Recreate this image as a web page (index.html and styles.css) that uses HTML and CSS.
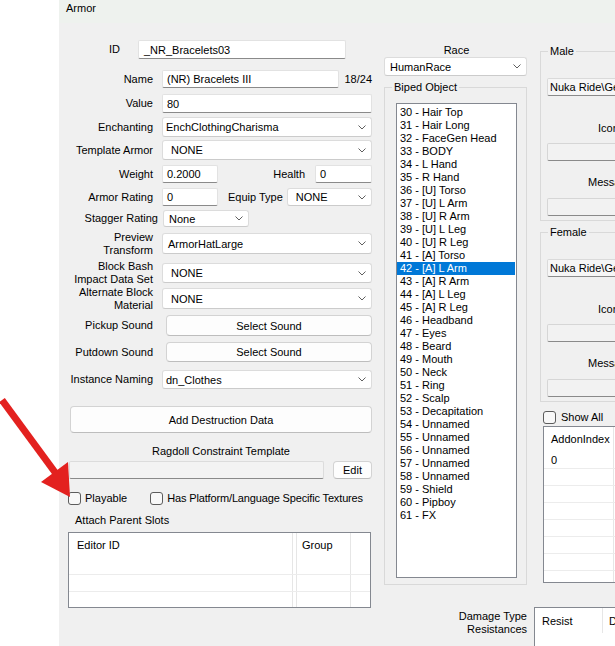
FILE: index.html
```html
<!DOCTYPE html>
<html>
<head>
<meta charset="utf-8">
<title>Armor</title>
<link rel="stylesheet" href="styles.css">
</head>
<body>
<div class="desk">
  <div class="gutter"></div>
  <div class="window">
    <div class="titlebar">Armor</div>
    <div class="client">
      <!-- record fields -->
      <div class="form">
        <div class="row r-id"><span class="lbl lbl-id">ID</span><div class="edit w-id">_NR_Bracelets03</div></div>
        <div class="row r-name"><span class="lbl">Name</span><div class="edit w-name">(NR) Bracelets III</div><span class="count">18/24</span></div>
        <div class="row r-value"><span class="lbl">Value</span><div class="edit grow">80</div></div>
        <div class="row r-ench"><span class="lbl">Enchanting</span><div class="combo grow"><span>EnchClothingCharisma</span><svg class="chev" width="8" height="5" viewBox="0 0 8 5"><path d="M0.5 0.5L4 4L7.5 0.5"/></svg></div></div>
        <div class="row r-tmpl"><span class="lbl">Template Armor</span><div class="combo grow wide-pad"><span>NONE</span><svg class="chev" width="8" height="5" viewBox="0 0 8 5"><path d="M0.5 0.5L4 4L7.5 0.5"/></svg></div></div>
        <div class="row r-weight"><span class="lbl">Weight</span><div class="edit w-num">0.2000</div><span class="inline-lbl health">Health</span><div class="edit w-num2">0</div></div>
        <div class="row r-armor"><span class="lbl">Armor Rating</span><div class="edit w-num">0</div><span class="inline-lbl equip">Equip Type</span><div class="combo grow wide-pad"><span>NONE</span><svg class="chev" width="8" height="5" viewBox="0 0 8 5"><path d="M0.5 0.5L4 4L7.5 0.5"/></svg></div></div>
        <div class="row r-stag"><span class="lbl lbl-stag">Stagger Rating</span><div class="combo w-stag mid-pad"><span>None</span><svg class="chev" width="8" height="5" viewBox="0 0 8 5"><path d="M0.5 0.5L4 4L7.5 0.5"/></svg></div></div>
        <div class="row r-prev"><span class="lbl">Preview<br>Transform</span><div class="combo grow mid-pad"><span>ArmorHatLarge</span><svg class="chev" width="8" height="5" viewBox="0 0 8 5"><path d="M0.5 0.5L4 4L7.5 0.5"/></svg></div></div>
        <div class="row r-bash"><span class="lbl">Block Bash<br>Impact Data Set</span><div class="combo grow wide-pad"><span>NONE</span><svg class="chev" width="8" height="5" viewBox="0 0 8 5"><path d="M0.5 0.5L4 4L7.5 0.5"/></svg></div></div>
        <div class="row r-alt"><span class="lbl">Alternate Block<br>Material</span><div class="combo grow wide-pad"><span>NONE</span><svg class="chev" width="8" height="5" viewBox="0 0 8 5"><path d="M0.5 0.5L4 4L7.5 0.5"/></svg></div></div>
        <div class="row r-pick"><span class="lbl">Pickup Sound</span><div class="btn grow sound">Select Sound</div></div>
        <div class="row r-put"><span class="lbl">Putdown Sound</span><div class="btn grow sound">Select Sound</div></div>
        <div class="row r-inst"><span class="lbl">Instance Naming</span><div class="combo grow"><span>dn_Clothes</span><svg class="chev" width="8" height="5" viewBox="0 0 8 5"><path d="M0.5 0.5L4 4L7.5 0.5"/></svg></div></div>

        <div class="btn destruction">Add Destruction Data</div>
        <div class="ragdoll-lbl">Ragdoll Constraint Template</div>
        <div class="row r-rag"><div class="field-off rag-field"></div><div class="btn edit-btn">Edit</div></div>
        <div class="row r-checks">
          <label class="check playable"><span class="box"></span>Playable</label>
          <label class="check platform"><span class="box"></span>Has Platform/Language Specific Textures</label>
        </div>
        <div class="attach-lbl">Attach Parent Slots</div>
        <div class="grid slots">
          <div class="grid-head"><div class="c c1">Editor ID</div><div class="c c2"></div><div class="c c3">Group</div><div class="c c4"></div></div>
          <div class="grid-row"><div class="c c1"></div><div class="c c2"></div><div class="c c3"></div><div class="c c4"></div></div>
          <div class="grid-row"><div class="c c1"></div><div class="c c2"></div><div class="c c3"></div><div class="c c4"></div></div>
          <div class="grid-row"><div class="c c1"></div><div class="c c2"></div><div class="c c3"></div><div class="c c4"></div></div>
        </div>
      </div>

      <div class="side">
        <div class="side-top">
          <!-- race and biped slots -->
          <div class="biped-col">
            <div class="race-lbl">Race</div>
            <div class="combo race"><span>HumanRace</span><svg class="chev" width="8" height="5" viewBox="0 0 8 5"><path d="M0.5 0.5L4 4L7.5 0.5"/></svg></div>
            <fieldset class="group biped">
              <legend>Biped Object</legend>
              <div class="listbox">
                <div class="item">30 - Hair Top</div>
                <div class="item">31 - Hair Long</div>
                <div class="item">32 - FaceGen Head</div>
                <div class="item">33 - BODY</div>
                <div class="item">34 - L Hand</div>
                <div class="item">35 - R Hand</div>
                <div class="item">36 - [U] Torso</div>
                <div class="item">37 - [U] L Arm</div>
                <div class="item">38 - [U] R Arm</div>
                <div class="item">39 - [U] L Leg</div>
                <div class="item">40 - [U] R Leg</div>
                <div class="item">41 - [A] Torso</div>
                <div class="item selected">42 - [A] L Arm</div>
                <div class="item">43 - [A] R Arm</div>
                <div class="item">44 - [A] L Leg</div>
                <div class="item">45 - [A] R Leg</div>
                <div class="item">46 - Headband</div>
                <div class="item">47 - Eyes</div>
                <div class="item">48 - Beard</div>
                <div class="item">49 - Mouth</div>
                <div class="item">50 - Neck</div>
                <div class="item">51 - Ring</div>
                <div class="item">52 - Scalp</div>
                <div class="item">53 - Decapitation</div>
                <div class="item">54 - Unnamed</div>
                <div class="item">55 - Unnamed</div>
                <div class="item">56 - Unnamed</div>
                <div class="item">57 - Unnamed</div>
                <div class="item">58 - Unnamed</div>
                <div class="item">59 - Shield</div>
                <div class="item">60 - Pipboy</div>
                <div class="item">61 - FX</div>
              </div>
            </fieldset>
          </div>

          <!-- world models -->
          <div class="models-col">
            <fieldset class="group model">
              <legend>Male</legend>
              <div class="path">Nuka Ride\Gear\Bracelets03.nif</div>
              <div class="cap cap-icon">Icon</div>
              <div class="slot"></div>
              <div class="cap cap-msg">Message Icon</div>
              <div class="slot"></div>
            </fieldset>
            <fieldset class="group model female">
              <legend>Female</legend>
              <div class="path">Nuka Ride\Gear\Bracelets03.nif</div>
              <div class="cap cap-icon">Icon</div>
              <div class="slot"></div>
              <div class="cap cap-msg">Message Icon</div>
              <div class="slot"></div>
            </fieldset>
            <label class="check show-all"><span class="box"></span>Show All</label>
            <div class="grid addons">
              <div class="grid-head"><div class="c a1">AddonIndex</div><div class="c a2">Model</div></div>
              <div class="grid-row"><div class="c a1">0</div><div class="c a2"></div></div>
              <div class="grid-row"><div class="c a1"></div><div class="c a2"></div></div>
              <div class="grid-row"><div class="c a1"></div><div class="c a2"></div></div>
              <div class="grid-row"><div class="c a1"></div><div class="c a2"></div></div>
              <div class="grid-row"><div class="c a1"></div><div class="c a2"></div></div>
              <div class="grid-row"><div class="c a1"></div><div class="c a2"></div></div>
              <div class="grid-row"><div class="c a1"></div><div class="c a2"></div></div>
              <div class="grid-row"><div class="c a1"></div><div class="c a2"></div></div>
            </div>
          </div>
        </div>

        <div class="damage">
          <div class="damage-lbl">Damage Type<br>Resistances</div>
          <div class="grid resist">
            <div class="grid-head"><div class="c d1">Resist</div><div class="c d2">Damage</div></div>
          </div>
        </div>
      </div>
    </div>
  </div>

  <svg class="arrow" width="80" height="510" viewBox="0 0 80 510">
    <line x1="2" y1="400" x2="57" y2="475" stroke="#e3211f" stroke-width="7"/>
    <polygon points="41,482 68,462 70,497" fill="#e3211f"/>
  </svg>
</div>
</body>
</html>
```

FILE: styles.css
```css
* { box-sizing: border-box; }

html, body {
  margin: 0;
  padding: 0;
}

body {
  width: 615px;
  height: 646px;
  overflow: hidden;
  background: #ffffff;
  font-family: "Liberation Sans", Arial, sans-serif;
  font-size: 11px;
  color: #000;
}

.desk {
  position: relative;
  display: flex;
  width: 615px;
  height: 646px;
}

.gutter {
  width: 59px;
  flex: none;
  background: #ffffff;
}

.window {
  width: 556px;
  height: 646px;
  flex: none;
  overflow: hidden;
  background: #f0f0f0;
  display: flex;
  flex-direction: column;
}

.titlebar {
  height: 23px;
  flex: none;
  background: #eef2ee;
  padding: 2px 0 0 7px;
  line-height: 13px;
}

.client {
  display: flex;
  flex: 1;
}

/* ---------- left form ---------- */

.form {
  width: 325px;
  flex: none;
  padding: 17px 12px 0 0;
}

.row {
  display: flex;
  align-items: center;
}

.row > .edit,
.row > .combo,
.row > .btn,
.row > .field-off {
  height: 100%;
}

.lbl {
  width: 94px;
  flex: none;
  text-align: right;
  margin-right: 9px;
  line-height: 13px;
  white-space: nowrap;
}

.lbl-id { width: 61px; margin-right: 18px; }
.lbl-stag { width: 99px; margin-right: 5px; }

.grow { flex: 1; min-width: 0; }

.r-id    { height: 19px; }
.r-name  { height: 18px; margin-top: 11px; }
.r-value { height: 19px; margin-top: 6px; }
.r-ench  { height: 20px; margin-top: 4px; }
.r-tmpl  { height: 20px; margin-top: 3px; }
.r-weight{ height: 18px; margin-top: 5px; }
.r-armor { height: 18px; margin-top: 5px; }
.r-stag  { height: 17px; margin-top: 4px; }
.r-prev  { height: 21px; margin-top: 6px; }
.r-bash  { height: 20px; margin-top: 9px; }
.r-alt   { height: 21px; margin-top: 5px; }
.r-pick  { height: 21px; margin-top: 6px; }
.r-put   { height: 20px; margin-top: 6px; }
.r-inst  { height: 19px; margin-top: 8px; }

.edit {
  display: flex;
  align-items: center;
  background: #ffffff;
  border: 1px solid #e2e2e2;
  border-bottom-color: #8a8a8a;
  border-radius: 2px;
  padding-left: 4px;
  white-space: nowrap;
  overflow: hidden;
}

.w-id   { width: 208px; padding-left: 5px; }
.w-name { width: 185px; }
.w-num  { width: 56px; flex: none; }
.w-num2 { width: 57px; flex: none; }

.count { margin-left: 5px; }

.inline-lbl { white-space: nowrap; }
.health { margin-left: auto; margin-right: 10px; }
.equip  { margin-left: 10px; margin-right: 4px; }

.combo {
  display: flex;
  align-items: center;
  justify-content: space-between;
  background: #ffffff;
  border: 1px solid #dcdcdc;
  border-bottom-color: #cbcbcb;
  border-radius: 3px;
  padding: 0 5px 0 3px;
  white-space: nowrap;
  overflow: hidden;
}

.wide-pad { padding-left: 8px; }
.mid-pad  { padding-left: 5px; }
.w-stag   { width: 86px; flex: none; }

.chev {
  flex: none;
  fill: none;
  stroke: #5f5f5f;
  stroke-width: 1;
}

.btn {
  display: flex;
  align-items: center;
  justify-content: center;
  background: #fdfdfd;
  border: 1px solid #d3d3d3;
  border-bottom-color: #bdbdbd;
  border-radius: 4px;
  white-space: nowrap;
}

.sound { margin-left: 4px; }

.destruction {
  height: 27px;
  margin: 17px 0 0 11px;
  width: 302px;
}

.ragdoll-lbl {
  height: 14px;
  line-height: 14px;
  margin: 11px 0 0 11px;
  width: 302px;
  text-align: center;
}

.r-rag { height: 18px; margin-top: 3px; }

.field-off {
  background: #f3f3f3;
  border: 1px solid #dcdcdc;
  border-bottom-color: #8a8a8a;
  border-radius: 2px;
}

.rag-field { width: 255px; margin-left: 10px; }
.edit-btn  { width: 39px; margin-left: 9px; }

.r-checks { height: 13px; margin-top: 13px; }

.check {
  display: flex;
  align-items: center;
  white-space: nowrap;
  line-height: 13px;
}

.box {
  width: 13px;
  height: 13px;
  flex: none;
  border: 1px solid #5c5c5c;
  border-radius: 3px;
  background: #f8f8f8;
  margin-right: 4px;
}

.playable { margin-left: 9px; }
.platform { margin-left: 23px; letter-spacing: -0.15px; }

.attach-lbl {
  height: 14px;
  line-height: 14px;
  margin: 8px 0 0 16px;
}

/* ---------- list views ---------- */

.grid {
  background: #ffffff;
  border: 1px solid #848890;
  overflow: hidden;
}

.grid-head {
  display: flex;
  height: 24px;
}

.grid-row {
  display: flex;
  height: 17px;
  border-top: 1px solid #ececec;
}

.grid-head + .grid-row { border-top: none; height: 17px; }

.c {
  display: flex;
  align-items: center;
  flex: none;
  white-space: nowrap;
  overflow: hidden;
  border-right: 1px solid #e6e6e6;
}

.slots {
  width: 303px;
  height: 76px;
  margin: 5px 0 0 9px;
}

.slots .c1 { width: 224px; padding-left: 8px; }
.slots .c2 { width: 4px; }
.slots .c3 { width: 54px; padding-left: 5px; }
.slots .c4 { flex: 1; border-right: none; }

/* ---------- right side ---------- */

.side {
  width: 300px;
  flex: none;
}

.side-top {
  display: flex;
  align-items: flex-start;
}

.biped-col {
  width: 143px;
  flex: none;
  padding-top: 21px;
}

.race-lbl {
  height: 13px;
  line-height: 13px;
  text-align: center;
  padding-left: 2px;
}

.race {
  height: 19px;
  padding-left: 5px;
}

fieldset.group {
  margin: 0;
  padding: 0;
  border: 1px solid #d9d9d9;
  min-width: 0;
}

fieldset.group legend {
  margin-left: 7px;
  padding: 0 2px;
  line-height: 13px;
}

fieldset.biped {
  margin-top: 5px;
  padding: 9px 0 6px 11px;
}

/* legend offsets compensate for the fieldset's left padding */
fieldset.biped legend { margin-left: -4px; }
fieldset.model legend { margin-left: 1px; }

.listbox {
  width: 121px;
  height: 475px;
  background: #ffffff;
  border: 1px solid #848890;
  padding-top: 2px;
  overflow: hidden;
}

.item {
  height: 13px;
  line-height: 13px;
  padding-left: 3px;
  margin-right: 1px;
  white-space: nowrap;
}

.item.selected {
  background: #0078d7;
  color: #ffffff;
}

.models-col {
  width: 200px;
  flex: none;
  margin-left: 13px;
  padding-top: 22px;
}

fieldset.model {
  padding: 20px 0 4px 6px;
}

fieldset.female { margin-top: 5px; }

.path {
  height: 18px;
  line-height: 16px;
  background: #f6f6f6;
  border: 1px solid #dadada;
  border-bottom-color: #8a8a8a;
  border-radius: 2px;
  padding-left: 2px;
  white-space: nowrap;
  overflow: hidden;
}

.cap {
  height: 13px;
  line-height: 13px;
  white-space: nowrap;
}

.cap-icon { margin-top: 26px; padding-left: 51px; }
.cap-msg  { margin-top: 15px; padding-left: 41px; }

.slot {
  height: 18px;
  margin-top: 8px;
  background: #f2f2f2;
  border: 1px solid #d6d6d6;
  border-bottom-color: #8a8a8a;
  border-radius: 2px;
}

.cap-msg + .slot { margin-top: 9px; }

.show-all {
  margin: 9px 0 0 3px;
  height: 13px;
}

.show-all .box { margin-right: 5px; }

.addons {
  width: 200px;
  height: 157px;
  margin: 2px 0 0 3px;
}

.addons .a1 { width: 70px; padding-left: 7px; }
.addons .a2 { flex: 1; padding-left: 6px; border-right: none; }

.damage {
  display: flex;
  align-items: flex-start;
  margin-top: 22px;
}

.damage-lbl {
  width: 143px;
  flex: none;
  text-align: right;
  line-height: 13px;
  padding-top: 3px;
}

.resist {
  width: 200px;
  height: 60px;
  margin-left: 7px;
  border-bottom: none;
}

.resist .grid-head { height: 25px; }
.resist .d1 { width: 68px; padding-left: 7px; }
.resist .d2 { flex: 1; padding-left: 6px; border-right: none; }

/* ---------- callout ---------- */

.arrow {
  position: absolute;
  left: 0;
  top: 0;
  pointer-events: none;
}
```
